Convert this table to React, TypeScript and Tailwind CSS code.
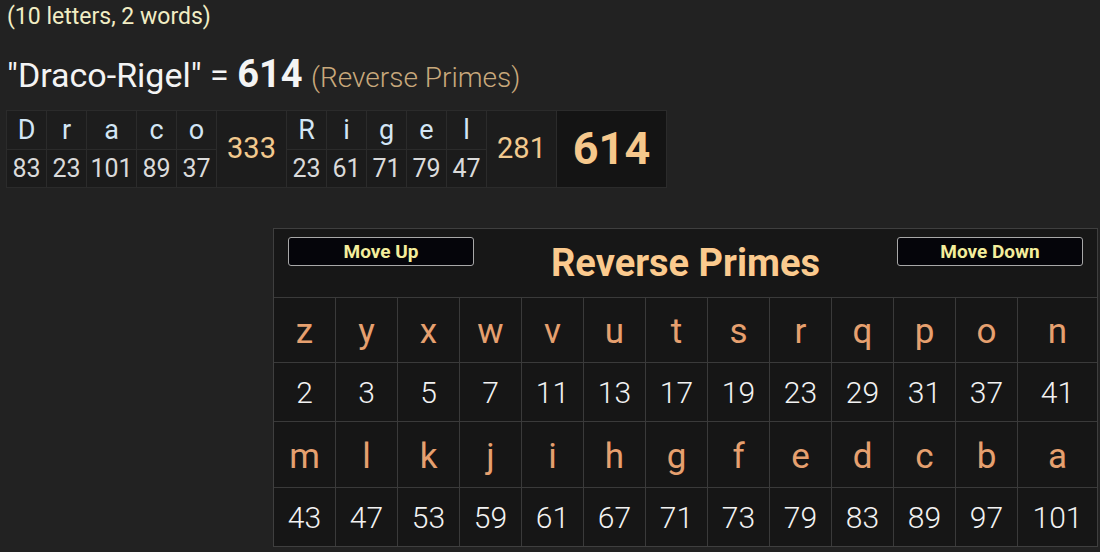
import React from 'react'

type Pair = [string, number]

const draco: Pair[] = [['D', 83], ['r', 23], ['a', 101], ['c', 89], ['o', 37]]
const rigel: Pair[] = [['R', 23], ['i', 61], ['g', 71], ['e', 79], ['l', 47]]

const cipher: Pair[] = [
  ['z', 2], ['y', 3], ['x', 5], ['w', 7], ['v', 11], ['u', 13], ['t', 17], ['s', 19], ['r', 23], ['q', 29], ['p', 31], ['o', 37], ['n', 41],
  ['m', 43], ['l', 47], ['k', 53], ['j', 59], ['i', 61], ['h', 67], ['g', 71], ['f', 73], ['e', 79], ['d', 83], ['c', 89], ['b', 97], ['a', 101],
]

function WordCells({ pairs }: { pairs: Pair[] }) {
  return (
    <>
      {pairs.map(([ch, n], i) => (
        <div key={i} className={`flex flex-col border-r border-[#2b2b2b] ${n >= 100 ? 'w-[50px]' : 'w-[40px]'}`}>
          <div className="h-[39px] flex items-center justify-center border-b border-[#2b2b2b] bg-[#1d1d1d] text-[27px] text-[#d3e6f5]">
            {ch}
          </div>
          <div className="h-[37px] flex items-center justify-center bg-[#1b1b1b] text-[25px] text-[#dadada]">
            {n}
          </div>
        </div>
      ))}
    </>
  )
}

function TotalCell({ value }: { value: number }) {
  return (
    <div className="w-[70px] h-[76px] flex items-center justify-center border-r border-[#2b2b2b] bg-[#1c1c1c] text-[29px] text-[#f2c98e]">
      {value}
    </div>
  )
}

function CipherRows({ pairs, first }: { pairs: Pair[]; first?: boolean }) {
  return (
    <>
      {pairs.map(([ch], i) => (
        <div
          key={'l' + i}
          className={`${first ? 'h-[64px]' : 'h-[65px]'} pt-[5px] flex items-center justify-center bg-[#161616] text-[35px] text-[#e6a06f]`}
        >
          {ch}
        </div>
      ))}
      {pairs.map(([, n], i) => (
        <div key={'n' + i} className="h-[58px] flex items-center justify-center bg-[#161616] text-[30px] font-light text-[#f2f2f2]">
          {n}
        </div>
      ))}
    </>
  )
}

export default function App() {
  return (
    <div className="min-h-[552px] w-[1100px] bg-[#222222] px-[6px] pt-[5px] font-['Roboto',sans-serif] overflow-hidden">
      <p className="text-[23px] leading-[24px] text-[#f1edc4] pl-px">(10 letters, 2 words)</p>

      <h2 className="mt-[27px] leading-[36px] text-[34px] text-[#f4f4f4] pl-px whitespace-nowrap">
        "Draco-Rigel" = <span className="font-bold text-[38px]">614</span>{' '}
        <span className="font-light text-[28px] text-[#c9a97c]">(Reverse Primes)</span>
      </h2>

      {/* letter breakdown */}
      <div className="mt-[14px] flex w-fit border border-[#2b2b2b]">
        <WordCells pairs={draco} />
        <TotalCell value={333} />
        <WordCells pairs={rigel} />
        <TotalCell value={281} />
        <div className="w-[109px] h-[76px] flex items-center justify-center bg-[#141414] text-[45px] font-bold text-[#f6c88c]">
          614
        </div>
      </div>

      {/* cipher chart */}
      <div className="mt-[40px] ml-[267px] w-[825px] flex flex-col gap-px bg-[#3a3a3a] border border-[#3f3f3f]">
        <div className="h-[68px] grid grid-cols-[186px_1fr_186px] grid-rows-1 px-[14px] bg-[#171717]">
          <button className="self-start mt-[8px] h-[29px] rounded-[3px] border border-[#a8a8a8] bg-[#05050a] text-[19px] font-bold text-[#f4ee9c]">
            Move Up
          </button>
          <h1 className="self-center text-center text-[38px] font-bold text-[#fbca8e] leading-none">Reverse Primes</h1>
          <button className="self-start mt-[8px] h-[29px] rounded-[3px] border border-[#a8a8a8] bg-[#05050a] text-[19px] font-bold text-[#f4ee9c]">
            Move Down
          </button>
        </div>
        <div className="grid grid-cols-[repeat(12,61px)_1fr] gap-px">
          <CipherRows pairs={cipher.slice(0, 13)} first />
          <CipherRows pairs={cipher.slice(13)} />
        </div>
      </div>
    </div>
  )
}
